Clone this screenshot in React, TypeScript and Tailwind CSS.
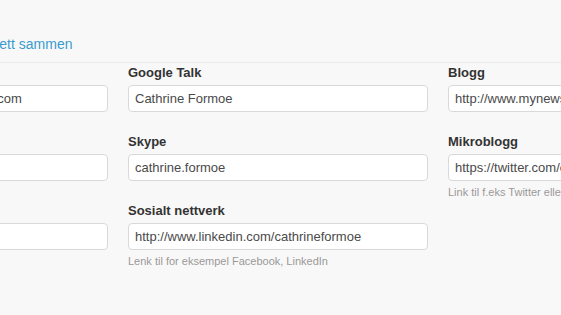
import React from 'react';

type Field = {
  label: string;
  value?: string;
  help?: string;
};

const columns: Field[][] = [
  [
    { label: 'E-post', value: 'cathrine.formoe@mynewsdesk.com' },
    { label: 'Telefon', value: '' },
    { label: 'Mobil', value: '' },
  ],
  [
    { label: 'Google Talk', value: 'Cathrine Formoe' },
    { label: 'Skype', value: 'cathrine.formoe' },
    {
      label: 'Sosialt nettverk',
      value: 'http://www.linkedin.com/cathrineformoe',
      help: 'Lenk til for eksempel Facebook, LinkedIn',
    },
  ],
  [
    { label: 'Blogg', value: 'http://www.mynewsdesk.com/no/blog' },
    {
      label: 'Mikroblogg',
      value: 'https://twitter.com/cathrineformoe',
      help: 'Link til f.eks Twitter eller Tumblr',
    },
  ],
];

const FormField = ({ field }: { field: Field }) => (
  <div className="mb-[21px]">
    <label className="block text-[13px] font-bold leading-[18px] text-[#333333] mb-[3px]">
      {field.label}
    </label>
    <input
      type="text"
      readOnly
      defaultValue={field.value}
      className="block w-full h-[27px] px-[6px] bg-white border border-[#d9d9d9] rounded-[4px] text-[13px] text-[#4a4a4a] outline-none"
    />
    {field.help && (
      <p className="mt-[4px] -mb-[15px] text-[11px] leading-[15px] text-[#999999]">{field.help}</p>
    )}
  </div>
);

const App = () => {
  return (
    <div className="min-h-screen w-full overflow-hidden bg-[#f9f8f8] font-['Liberation_Sans',Arial,sans-serif]">
      {/* Header link */}
      <div className="pt-[34px] pb-[8px]">
        <a href="#" className="block ml-[-10px] text-[14px] leading-[20px] text-[#3a9bcf] whitespace-nowrap">
          Sett sammen
        </a>
      </div>

      {/* Contact fields */}
      <div className="border-t border-[#ebe9e9]">
        <div className="ml-[-192px] pt-[1px] grid grid-cols-[300px_300px_300px] gap-x-[20px] w-max">
          {columns.map((col, i) => (
            <div key={i}>
              {col.map((field) => (
                <FormField key={field.label} field={field} />
              ))}
            </div>
          ))}
        </div>
      </div>
    </div>
  );
};

export default App;
